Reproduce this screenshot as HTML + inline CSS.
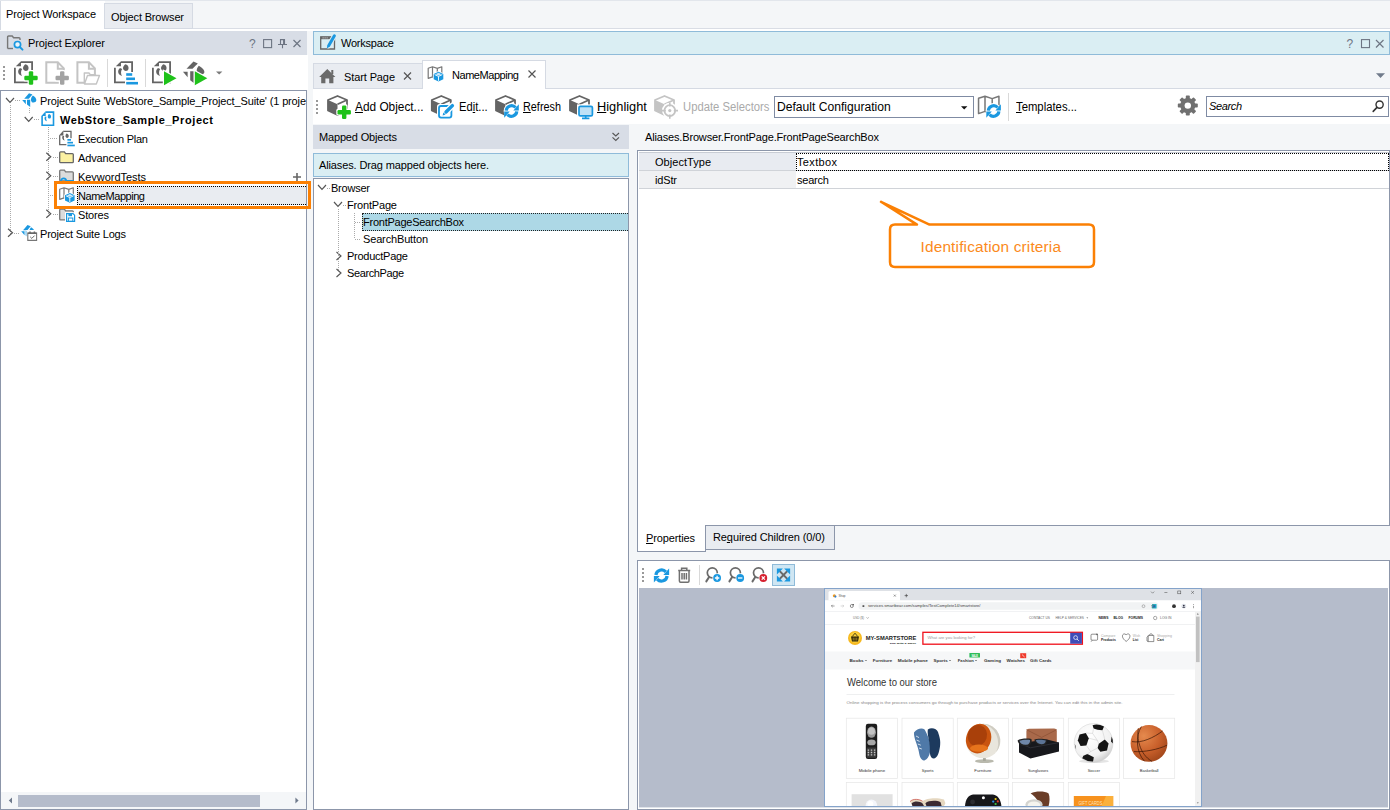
<!DOCTYPE html>
<html><head><meta charset="utf-8"><title>NameMapping</title><style>
html,body{margin:0;padding:0;}
body{width:1390px;height:810px;position:relative;overflow:hidden;background:#f4f6f8;font-family:"Liberation Sans", sans-serif;font-size:11px;}
body>div,body>span,body>svg{position:absolute;}
.t{white-space:nowrap;display:block;}
u{text-decoration:underline;text-underline-offset:1px;}
</style></head><body>
<div style="left:0px;top:0px;width:1390px;height:1px;background:#e2e6ec;"></div>
<div style="left:0px;top:28px;width:1390px;height:1px;background:#d9dde5;"></div>
<div style="left:0px;top:29px;width:1390px;height:2px;background:#fff;"></div>
<div style="left:0px;top:0px;width:105px;height:30px;background:#fff;"></div>
<div style="left:0px;top:0px;width:1px;height:30px;background:#d5dae3;"></div>
<div style="left:0px;top:0px;width:105px;height:1px;background:#e2e6ec;"></div>
<div style="left:104px;top:3px;width:89px;height:26px;background:#e9ecf1;box-shadow:inset 0 0 0 1px #d5dae3;"></div>
<span id="t0" class="t" style="left:6px;top:6.19px;font-size:11px;color:#000;line-height:16px;letter-spacing:-0.132px;">Project Workspace</span>
<span id="t1" class="t" style="left:111px;top:9.19px;font-size:11px;color:#000;line-height:16px;letter-spacing:-0.169px;">Object Browser</span>
<div style="left:0px;top:31px;width:307px;height:24px;background:#d8dde6;"></div>
<span id="t2" class="t" style="left:28px;top:35.19px;font-size:11px;color:#000;line-height:16px;letter-spacing:-0.084px;">Project Explorer</span>
<svg style="left:5px;top:33px;" width="22" height="20" viewBox="0 0 22 20"><path d="M2.6 15.5 V4 Q2.6 3 3.6 3 H7.2 L8.6 4.8 H14 Q15 4.8 15 5.8 V7" fill="none" stroke="#777" stroke-width="1.4"/>
<path d="M2.6 15.5 H8" stroke="#777" stroke-width="1.4"/>
<circle cx="12.5" cy="11.6" r="3.1" fill="#eaf4fb" stroke="#1a98e0" stroke-width="1.7"/><path d="M14.8 14 L17.5 16.6" stroke="#1a98e0" stroke-width="2" stroke-linecap="round"/></svg>
<svg style="left:245px;top:35px;" width="62" height="16" viewBox="0 0 62 16"><text x="4" y="13.2" font-size="12" fill="#6d7583" font-family="Liberation Sans, sans-serif">?</text>
<rect x="18.6" y="4.6" width="8" height="8" fill="none" stroke="#6d7583" stroke-width="1.1"/>
<path d="M33 9.5 H42 M35.5 9.5 V4.6 H39.5 V9.5 M38.6 4.6 V9.5 M37.5 9.5 V13.3" fill="none" stroke="#6d7583" stroke-width="1.1"/>
<path d="M48.5 5 L55.5 12 M55.5 5 L48.5 12" stroke="#6d7583" stroke-width="1.2"/></svg>
<div style="left:0px;top:55px;width:308px;height:35px;background:#fff;"></div>
<svg style="left:0px;top:55px;" width="308" height="35" viewBox="0 55 308 35"><rect x="3" y="66" width="2" height="2" fill="#999"/><rect x="3" y="70" width="2" height="2" fill="#999"/><rect x="3" y="74" width="2" height="2" fill="#999"/><rect x="3" y="78" width="2" height="2" fill="#999"/><g transform="translate(14 61.3)"><path d="M7 0.9 H18.1 V21.1 H0.9 V6.4" fill="none" stroke="#646464" stroke-width="1.8"/><path d="M1.8 5 L7 0 V5 Z" fill="#646464"/><path d="M6 6.8 C3.2 9 3.4 13.4 8 14.6 C6.6 12.6 6.8 9.6 8.2 7.8 Z" fill="#646464"/><path d="M11.6 3 C14.6 4 15.4 7.2 13.6 9.2 C11.6 10.4 9 9.2 9 6.8 C9.2 4.8 10.4 3.6 11.6 3 Z" fill="#646464"/></g><rect x="23.1" y="74.6" width="15.8" height="6.800000000000001" rx="1.6" fill="#fff"/><rect x="27.6" y="70.1" width="6.800000000000001" height="15.8" rx="1.6" fill="#fff"/><rect x="24.3" y="75.8" width="13.4" height="4.4" rx="1.2" fill="#1fc21a"/><rect x="28.8" y="71.3" width="4.4" height="13.4" rx="1.2" fill="#1fc21a"/><g transform="translate(45.3 61.3)"><path d="M1 1 H12.5 L18.5 7 V21.5 H1 Z" fill="none" stroke="#c4c4c4" stroke-width="2"/><path d="M12.5 1 V7.5 H18.5" fill="none" stroke="#c4c4c4" stroke-width="2"/></g><rect x="54.3" y="74.6" width="15.8" height="6.800000000000001" rx="1.6" fill="#fff"/><rect x="58.8" y="70.1" width="6.800000000000001" height="15.8" rx="1.6" fill="#fff"/><rect x="55.5" y="75.8" width="13.4" height="4.4" rx="1.2" fill="#a3a3a3"/><rect x="60.0" y="71.3" width="4.4" height="13.4" rx="1.2" fill="#a3a3a3"/><g transform="translate(76.4 61.3)"><path d="M1 1 H12.5 L18.5 7 V21.5 H1 Z" fill="none" stroke="#c4c4c4" stroke-width="2"/><path d="M12.5 1 V7.5 H18.5" fill="none" stroke="#c4c4c4" stroke-width="2"/></g><path d="M84.5 84 L87.5 75.5 H99.5 L96.3 84 Z M84.3 84 V73 H89 L90.3 74.6 H95.5 V75.5" fill="#fff" stroke="#c4c4c4" stroke-width="1.4" stroke-linejoin="round"/><rect x="107" y="59" width="1" height="28" fill="#d9d9d9"/><g transform="translate(114 61.3)"><path d="M7 0.9 H18.1 V21.1 H0.9 V6.4" fill="none" stroke="#646464" stroke-width="1.8"/><path d="M1.8 5 L7 0 V5 Z" fill="#646464"/><path d="M6 6.8 C3.2 9 3.4 13.4 8 14.6 C6.6 12.6 6.8 9.6 8.2 7.8 Z" fill="#646464"/><path d="M11.6 3 C14.6 4 15.4 7.2 13.6 9.2 C11.6 10.4 9 9.2 9 6.8 C9.2 4.8 10.4 3.6 11.6 3 Z" fill="#646464"/></g><rect x="125" y="72" width="14" height="14" fill="#fff"/><rect x="126.2" y="73.2" width="6" height="2.6" fill="#1a98e0"/><rect x="126.2" y="77.5" width="8.8" height="2.6" fill="#1a98e0"/><rect x="126.2" y="81.9" width="11.8" height="2.6" fill="#1a98e0"/><rect x="145" y="59" width="1" height="28" fill="#d9d9d9"/><g transform="translate(152 61.3)"><path d="M7 0.9 H18.1 V21.1 H0.9 V6.4" fill="none" stroke="#646464" stroke-width="1.8"/><path d="M1.8 5 L7 0 V5 Z" fill="#646464"/><path d="M6 6.8 C3.2 9 3.4 13.4 8 14.6 C6.6 12.6 6.8 9.6 8.2 7.8 Z" fill="#646464"/><path d="M11.6 3 C14.6 4 15.4 7.2 13.6 9.2 C11.6 10.4 9 9.2 9 6.8 C9.2 4.8 10.4 3.6 11.6 3 Z" fill="#646464"/></g><path d="M162.8 69.2 L179.0 78.2 L162.8 87.2 Z" fill="#fff"/><path d="M164 71.2 L176.5 78.2 L164 85.2 Z" fill="#1fc21a"/><g transform="translate(183 61.2)"><path d="M3.5 7.5 L10.5 0.3 L14.8 2.2 L9.5 7.5 Z" fill="#646464"/><path d="M0 10.5 H4.6 V16 Z" fill="#646464"/><path d="M7.2 10 H10.8 V21.8 L7.2 19 Z" fill="#646464"/><path d="M15.8 4.6 C19 6.5 21.8 9 21.3 11.2 C20.5 13.6 17.5 13.8 15.2 13 C13.2 11.5 13 7.5 15.8 4.6 Z" fill="#646464"/></g><path d="M193.60000000000002 69.2 L209.8 78.2 L193.60000000000002 87.2 Z" fill="#fff"/><path d="M194.8 71.2 L207.3 78.2 L194.8 85.2 Z" fill="#1fc21a"/><path d="M216 71.5 H222.4 L219.2 74.6 Z" fill="#7a7a7a"/></svg>
<div style="left:0px;top:90px;width:307px;height:720px;background:#fff;box-shadow:inset 0 0 0 1px #8c96aa;"></div>
<div style="left:10px;top:105px;width:1px;height:129px;background-image:linear-gradient(#aaa 50%,transparent 50%);background-size:1px 2px;"></div>
<div style="left:29px;top:108px;width:1px;height:6px;background-image:linear-gradient(#aaa 50%,transparent 50%);background-size:1px 2px;"></div>
<div style="left:48px;top:127px;width:1px;height:88px;background-image:linear-gradient(#aaa 50%,transparent 50%);background-size:1px 2px;"></div>
<div style="left:15px;top:100px;width:6px;height:1px;background-image:linear-gradient(90deg,#aaa 50%,transparent 50%);background-size:2px 1px;"></div>
<div style="left:34px;top:119px;width:6px;height:1px;background-image:linear-gradient(90deg,#aaa 50%,transparent 50%);background-size:2px 1px;"></div>
<div style="left:50px;top:138px;width:8px;height:1px;background-image:linear-gradient(90deg,#aaa 50%,transparent 50%);background-size:2px 1px;"></div>
<div style="left:53px;top:157px;width:5px;height:1px;background-image:linear-gradient(90deg,#aaa 50%,transparent 50%);background-size:2px 1px;"></div>
<div style="left:53px;top:176px;width:5px;height:1px;background-image:linear-gradient(90deg,#aaa 50%,transparent 50%);background-size:2px 1px;"></div>
<div style="left:50px;top:195px;width:8px;height:1px;background-image:linear-gradient(90deg,#aaa 50%,transparent 50%);background-size:2px 1px;"></div>
<div style="left:53px;top:214px;width:5px;height:1px;background-image:linear-gradient(90deg,#aaa 50%,transparent 50%);background-size:2px 1px;"></div>
<div style="left:14px;top:233px;width:6px;height:1px;background-image:linear-gradient(90deg,#aaa 50%,transparent 50%);background-size:2px 1px;"></div>
<svg style="left:0px;top:90px;" width="307" height="160" viewBox="0 90 307 160"><path d="M6 98 L10 102.5 L14 98" fill="none" stroke="#555" stroke-width="1.15"/><path d="M24.7 117 L28.7 121.5 L32.7 117" fill="none" stroke="#555" stroke-width="1.15"/><path d="M46.3 152.8 L50.8 156.8 L46.3 160.8" fill="none" stroke="#555" stroke-width="1.15"/><path d="M46.3 171.8 L50.8 175.8 L46.3 179.8" fill="none" stroke="#555" stroke-width="1.15"/><path d="M46.3 209.8 L50.8 213.8 L46.3 217.8" fill="none" stroke="#555" stroke-width="1.15"/><path d="M8 228.8 L12.5 232.8 L8 236.8" fill="none" stroke="#555" stroke-width="1.15"/><g transform="translate(22.2 93)"><path d="M2 5.8 L6.8 0.2 L10.2 1.6 L6.6 5.8 Z" fill="#1a98e0"/><path d="M0 6.9 H3.6 V11.2 Z" fill="#1a98e0"/><path d="M4.8 6.8 H8 V14 L4.8 11.4 Z" fill="#1a98e0"/><path d="M10.6 2.6 C12.8 3.8 14.4 5.8 14.1 7.6 C13.5 9.6 11.4 9.8 9.7 9.2 C8.2 8 8.4 4.8 10.6 2.6 Z" fill="#1a98e0"/></g><g transform="translate(41.3 111.3)"><path d="M4.3 0.8 H12.2 V14 H0.8 V4.6" fill="#fff" stroke="#1a98e0" stroke-width="1.6"/><path d="M0 4.8 L4.4 0 V4.8 Z" fill="#1a98e0"/><path d="M3.6 5.2 C2.6 7.5 3.4 9.6 5.8 10 C4.8 8.6 4.6 7 5.2 5.4 Z" fill="#1a98e0"/><path d="M7.8 2.8 C9.8 3.4 10.4 5.4 9.2 7 C7.8 7.8 6.3 6.8 6.5 5.1 C6.6 3.8 7.1 3.1 7.8 2.8 Z" fill="#1a98e0"/></g><g transform="translate(59 130.6)"><path d="M4.3 0.7 H12 V14 H0.7 V4.6" fill="#fff" stroke="#666" stroke-width="1.3"/><path d="M0 4.8 L4.4 0 V4.8 Z" fill="#666"/><path d="M3.6 5.2 C2.6 7.5 3.4 9.6 5.8 10 C4.8 8.6 4.6 7 5.2 5.4 Z" fill="#666"/><path d="M7.8 2.8 C9.8 3.4 10.4 5.4 9.2 7 C7.8 7.8 6.3 6.8 6.5 5.1 C6.6 3.8 7.1 3.1 7.8 2.8 Z" fill="#666"/><rect x="7.4" y="7.6" width="8.4" height="8" fill="#fff"/><rect x="8.4" y="8.4" width="3.6" height="1.7" fill="#1a98e0"/><rect x="8.4" y="11.2" width="5.6" height="1.7" fill="#1a98e0"/><rect x="8.4" y="14" width="7.4" height="1.7" fill="#1a98e0"/></g><g transform="translate(59 151.2)"><path d="M0.7 1.6 Q0.7 0.7 1.6 0.7 H5.4 L6.6 2.4 H13.4 Q14.3 2.4 14.3 3.3 V10.6 Q14.3 11.5 13.4 11.5 H1.6 Q0.7 11.5 0.7 10.6 Z" fill="#fbf1a2" stroke="#666" stroke-width="1.3"/></g><g transform="translate(59 169.4)"><path d="M0.7 1.6 Q0.7 0.7 1.6 0.7 H5.4 L6.6 2.4 H13.4 Q14.3 2.4 14.3 3.3 V10.6 Q14.3 11.5 13.4 11.5 H1.6 Q0.7 11.5 0.7 10.6 Z" fill="#dcdcdc" stroke="#777" stroke-width="1.3"/></g><path d="M61 181 a2.6 2.6 0 1 1 5.2 0 H74" fill="none" stroke="#1a98e0" stroke-width="1.8"/><g transform="translate(59 208.4)"><path d="M0.7 1.6 Q0.7 0.7 1.6 0.7 H5.4 L6.6 2.4 H13.4 Q14.3 2.4 14.3 3.3 V10.6 Q14.3 11.5 13.4 11.5 H1.6 Q0.7 11.5 0.7 10.6 Z" fill="#dcdcdc" stroke="#777" stroke-width="1.3"/></g><rect x="65" y="212.2" width="11" height="10.6" fill="#fff"/><path d="M66.6 213.6 H73 L74.6 215.2 V221.4 H66.6 Z" fill="#fff" stroke="#1a98e0" stroke-width="1.2"/><rect x="68.4" y="213.6" width="3.6" height="2.6" fill="#1a98e0"/><rect x="68.4" y="218" width="4.4" height="3.4" fill="none" stroke="#1a98e0" stroke-width="1"/><g transform="translate(21.2 224.8) scale(0.93)"><path d="M2 5.8 L6.8 0.2 L10.2 1.6 L6.6 5.8 Z" fill="#1a98e0"/><path d="M0 6.9 H3.6 V11.2 Z" fill="#1a98e0"/><path d="M4.8 6.8 H8 V14 L4.8 11.4 Z" fill="#1a98e0"/><path d="M10.6 2.6 C12.8 3.8 14.4 5.8 14.1 7.6 C13.5 9.6 11.4 9.8 9.7 9.2 C8.2 8 8.4 4.8 10.6 2.6 Z" fill="#1a98e0"/></g><rect x="26.4" y="230" width="11.6" height="11.6" fill="#fff"/><path d="M27.8 233 H36.6 V240.4 H27.8 Z" fill="#fff" stroke="#777" stroke-width="1.1"/><path d="M27.8 233.2 H36.6 M30 231.4 V233 M34.4 231.4 V233" stroke="#666" stroke-width="1.5"/><path d="M30.2 236.8 L31.8 238.4 L34.6 235.6" fill="none" stroke="#666" stroke-width="1"/><path d="M293 177 H301 M297 173 V181" stroke="#666" stroke-width="1.6"/></svg>
<span id="t3" class="t" style="left:40px;top:93.19px;font-size:11px;color:#000;line-height:16px;letter-spacing:-0.144px;">Project Suite 'WebStore_Sample_Project_Suite' (1 proje</span>
<span id="t4" class="t" style="left:60px;top:112.19px;font-size:11px;color:#000;line-height:16px;font-weight:700;letter-spacing:0.600px;">WebStore_Sample_Project</span>
<span id="t5" class="t" style="left:78px;top:131.19px;font-size:11px;color:#000;line-height:16px;letter-spacing:-0.261px;">Execution Plan</span>
<span id="t6" class="t" style="left:78px;top:150.19px;font-size:11px;color:#000;line-height:16px;letter-spacing:-0.134px;">Advanced</span>
<span id="t7" class="t" style="left:78px;top:169.19px;font-size:11px;color:#000;line-height:16px;letter-spacing:-0.044px;">KeywordTests</span>
<div style="left:77px;top:186px;width:229px;height:19px;background:#e9ecf1;box-sizing:border-box;border:1px dotted #000;border-right:none"></div>
<div style="left:54px;top:181px;width:251px;height:22px;border:3px solid #fb8004;box-sizing:content-box;"></div>
<svg style="left:57px;top:185px;" width="22" height="20" viewBox="57 185 22 20"><g transform="translate(59 187)"><path d="M0.7 2.2 L5 0.8 L9.8 2.4 L14.3 0.8 V11 L9.8 12.5 L5 10.9 L0.7 12.4 Z M5 0.8 V10.9 M9.8 2.4 V12.5" fill="#fff" stroke="#777" stroke-width="1.2" stroke-linejoin="round"/></g><g transform="translate(64.8 192.8)"><path d="M5 -0.6 L10.6 2 V8 L5 10.8 L-0.6 8 V2 Z" fill="#fff"/><path d="M5 0.2 L9.8 2.4 V7.6 L5 10 L0.2 7.6 V2.4 Z" fill="#1a98e0"/><path d="M1.2 3 L5 4.8 L8.8 3 M5 4.8 V9.2" fill="none" stroke="#fff" stroke-width="0.9"/><path d="M5 1.2 L8 2.6 L5 4 L2 2.6 Z" fill="#cfe9f9"/></g></svg>
<span id="t8" class="t" style="left:78px;top:188.19px;font-size:11px;color:#000;line-height:16px;letter-spacing:-0.455px;">NameMapping</span>
<span id="t9" class="t" style="left:78px;top:207.19px;font-size:11px;color:#000;line-height:16px;letter-spacing:-0.159px;">Stores</span>
<span id="t10" class="t" style="left:40px;top:226.19px;font-size:11px;color:#000;line-height:16px;letter-spacing:-0.193px;">Project Suite Logs</span>
<div style="left:1px;top:792px;width:305px;height:17px;background:#f4f6f8;"></div>
<div style="left:18px;top:795px;width:242px;height:12px;background:#b5bccb;"></div>
<svg style="left:1px;top:792px;" width="305" height="17" viewBox="0 0 305 17"><path d="M11 5.6 V11.6 L7.8 8.6 Z M294.4 5.6 V11.6 L297.6 8.6 Z" fill="#6f7a8c"/></svg>
<div style="left:313px;top:31px;width:1077px;height:24px;background:#daeef3;box-shadow:inset 0 0 0 1px #8fbbd9;"></div>
<span id="t11" class="t" style="left:341px;top:35.19px;font-size:11px;color:#000;line-height:16px;letter-spacing:-0.229px;">Workspace</span>
<svg style="left:318px;top:33px;" width="20" height="18" viewBox="0 0 20 18"><path d="M2.7 4 H16.5 V16 H2.7 Z" fill="#daeef3" stroke="#666" stroke-width="1.3"/><rect x="2.7" y="3.6" width="13.8" height="2.6" fill="#666"/><rect x="4.6" y="4.4" width="1" height="1" fill="#ddd"/><rect x="6.6" y="4.4" width="1" height="1" fill="#ddd"/><rect x="8.6" y="4.4" width="1" height="1" fill="#ddd"/><path d="M10.4 13 L16.6 2.4" stroke="#daeef3" stroke-width="5" stroke-linecap="round"/><path d="M10.8 12.4 L16.4 2.8" stroke="#1a98e0" stroke-width="3" stroke-linecap="round"/><path d="M8.8 15.4 L9.4 12.2 L11.8 13.6 Z" fill="#1a98e0"/></svg>
<svg style="left:1340px;top:35px;" width="50" height="16" viewBox="0 0 50 16"><text x="6.5" y="13.2" font-size="12" fill="#6d7583" font-family="Liberation Sans, sans-serif">?</text>
<rect x="21.5" y="4.6" width="8" height="8" fill="none" stroke="#6d7583" stroke-width="1.1"/>
<path d="M36 5 L43.5 12.5 M43.5 5 L36 12.5" stroke="#6d7583" stroke-width="1.2"/></svg>
<div style="left:313px;top:88px;width:1077px;height:1px;background:#d5dae3;"></div>
<div style="left:313px;top:63px;width:110px;height:26px;background:#e9ecf1;box-shadow:inset 0 0 0 1px #d5dae3;"></div>
<div style="left:422px;top:60px;width:124px;height:29px;background:#fff;box-shadow:inset 0 0 0 1px #d5dae3;"></div>
<div style="left:423px;top:88px;width:122px;height:2px;background:#fff;"></div>
<span id="t12" class="t" style="left:344px;top:69.19px;font-size:11px;color:#000;line-height:16px;letter-spacing:-0.109px;">Start Page</span>
<span id="t13" class="t" style="left:452px;top:67.19px;font-size:11px;color:#000;line-height:16px;letter-spacing:-0.455px;">NameMapping</span>
<svg style="left:313px;top:60px;" width="1077" height="29" viewBox="313 60 1077 29"><path d="M319.2 77 L327.3 69 L335.4 77 H333.4 V83.2 H329.2 V78.6 H325.4 V83.2 H321.2 V77 Z" fill="#6a6a6a"/><rect x="331.3" y="70" width="2" height="4" fill="#6a6a6a"/><path d="M404 72.5 L411 79.5 M411 72.5 L404 79.5 M528.5 70.5 L535.5 77.5 M535.5 70.5 L528.5 77.5" stroke="#555" stroke-width="1.2"/><g transform="translate(427.5 66)"><path d="M0.7 2.2 L5 0.8 L9.8 2.4 L14.3 0.8 V11 L9.8 12.5 L5 10.9 L0.7 12.4 Z M5 0.8 V10.9 M9.8 2.4 V12.5" fill="#fff" stroke="#777" stroke-width="1.2" stroke-linejoin="round"/></g><g transform="translate(433.5 71.6)"><path d="M5 -0.6 L10.6 2 V8 L5 10.8 L-0.6 8 V2 Z" fill="#fff"/><path d="M5 0.2 L9.8 2.4 V7.6 L5 10 L0.2 7.6 V2.4 Z" fill="#1a98e0"/><path d="M1.2 3 L5 4.8 L8.8 3 M5 4.8 V9.2" fill="none" stroke="#fff" stroke-width="0.9"/><path d="M5 1.2 L8 2.6 L5 4 L2 2.6 Z" fill="#cfe9f9"/></g><path d="M1376 73.2 H1385 L1380.5 78 Z" fill="#717b8b"/></svg>
<div style="left:313px;top:89px;width:1077px;height:35px;background:#fff;"></div>
<svg style="left:313px;top:89px;" width="1077" height="35" viewBox="313 89 1077 35"><rect x="316" y="100" width="2" height="2" fill="#999"/><rect x="316" y="104" width="2" height="2" fill="#999"/><rect x="316" y="108" width="2" height="2" fill="#999"/><rect x="316" y="112" width="2" height="2" fill="#999"/><g transform="translate(327 95)"><path d="M10.5 1 L20 5 V15.5 L10.5 20 L1 15.5 V5 Z" fill="#fff" stroke="#646464" stroke-width="1.8" stroke-linejoin="round"/><path d="M1 5 L10.5 9.3 V20 L1 15.5 Z" fill="#646464"/><path d="M10.5 9.3 L20 5" stroke="#646464" stroke-width="1.8" fill="none"/></g><rect x="336.3" y="108.8" width="15.8" height="6.800000000000001" rx="1.6" fill="#fff"/><rect x="340.8" y="104.3" width="6.800000000000001" height="15.8" rx="1.6" fill="#fff"/><rect x="337.5" y="110.0" width="13.4" height="4.4" rx="1.2" fill="#1fc21a"/><rect x="342.0" y="105.5" width="4.4" height="13.4" rx="1.2" fill="#1fc21a"/><g transform="translate(430.8 95)"><path d="M10.5 1 L20 5 V15.5 L10.5 20 L1 15.5 V5 Z" fill="#fff" stroke="#646464" stroke-width="1.8" stroke-linejoin="round"/><path d="M1 5 L10.5 9.3 V20 L1 15.5 Z" fill="#646464"/><path d="M10.5 9.3 L20 5" stroke="#646464" stroke-width="1.8" fill="none"/></g><rect x="437" y="104" width="16" height="15.4" rx="2.5" fill="#fff"/><rect x="439" y="106" width="12.4" height="11.6" rx="2" fill="#fff" stroke="#1a98e0" stroke-width="1.8"/><path d="M445.6 112.4 L452.6 105.4" stroke="#fff" stroke-width="6" stroke-linecap="round"/><path d="M446 112 L452.4 105.6" stroke="#1a98e0" stroke-width="3.4" stroke-linecap="round"/><path d="M442.6 115.4 L443.4 112.4 L445.6 114.6 Z" fill="#1a98e0"/><g transform="translate(495 95)"><path d="M10.5 1 L20 5 V15.5 L10.5 20 L1 15.5 V5 Z" fill="#fff" stroke="#646464" stroke-width="1.8" stroke-linejoin="round"/><path d="M1 5 L10.5 9.3 V20 L1 15.5 Z" fill="#646464"/><path d="M10.5 9.3 L20 5" stroke="#646464" stroke-width="1.8" fill="none"/></g><circle cx="511.5" cy="111" r="7.9" fill="#fff"/><path d="M506.22 110.54 A5.3 5.3 0 0 1 515.56 107.59 M516.78 111.46 A5.3 5.3 0 0 1 507.44 114.41" fill="none" stroke="#1a98e0" stroke-width="3.2"/><path d="M518.80 104.20 V110.60 H513.30 Z" fill="#1a98e0"/><path d="M504.20 117.80 V111.40 H509.70 Z" fill="#1a98e0"/><g transform="translate(569 95)"><path d="M10.5 1 L20 5 V15.5 L10.5 20 L1 15.5 V5 Z" fill="#fff" stroke="#646464" stroke-width="1.8" stroke-linejoin="round"/><path d="M1 5 L10.5 9.3 V20 L1 15.5 Z" fill="#646464"/><path d="M10.5 9.3 L20 5" stroke="#646464" stroke-width="1.8" fill="none"/></g><rect x="577" y="104.4" width="17.4" height="15.6" fill="#fff"/><rect x="579" y="106.4" width="13.4" height="9.4" rx="1.4" fill="#bfe1f6" stroke="#1a98e0" stroke-width="1.7"/><path d="M585.7 116 V118 M582 118.4 H589.4" stroke="#1a98e0" stroke-width="1.7"/><g transform="translate(654 95)"><path d="M10.5 1 L20 5 V15.5 L10.5 20 L1 15.5 V5 Z" fill="#fff" stroke="#c4c4c4" stroke-width="1.8" stroke-linejoin="round"/><path d="M1 5 L10.5 9.3 V20 L1 15.5 Z" fill="#c4c4c4"/><path d="M10.5 9.3 L20 5" stroke="#c4c4c4" stroke-width="1.8" fill="none"/></g><circle cx="669.8" cy="110.6" r="7.8" fill="#fff"/><circle cx="669.8" cy="110.6" r="5.4" fill="#fff" stroke="#c4c4c4" stroke-width="1.8"/><path d="M669.8 102.4 V106.6 M669.8 114.6 V118.8 M661.6 110.6 H665.8 M673.8 110.6 H678" stroke="#c4c4c4" stroke-width="1.6"/><circle cx="669.8" cy="110.6" r="1.6" fill="#c4c4c4"/><g transform="translate(977.5 95) scale(1.5)"><path d="M0.7 2.2 L5 0.8 L9.8 2.4 L14.3 0.8 V11 L9.8 12.5 L5 10.9 L0.7 12.4 Z M5 0.8 V10.9 M9.8 2.4 V12.5" fill="#fff" stroke="#777" stroke-width="1.0" stroke-linejoin="round"/></g><circle cx="993.6" cy="111" r="7.9" fill="#fff"/><path d="M988.32 110.54 A5.3 5.3 0 0 1 997.66 107.59 M998.88 111.46 A5.3 5.3 0 0 1 989.54 114.41" fill="none" stroke="#1a98e0" stroke-width="3.2"/><path d="M1000.90 104.20 V110.60 H995.40 Z" fill="#1a98e0"/><path d="M986.30 117.80 V111.40 H991.80 Z" fill="#1a98e0"/><rect x="1008" y="93" width="1" height="28" fill="#d9d9d9"/><g transform="translate(1187.8 105.6)"><rect x="-2" y="-10" width="4" height="5" rx="0.8" fill="#707070" transform="rotate(0)"/><rect x="-2" y="-10" width="4" height="5" rx="0.8" fill="#707070" transform="rotate(45)"/><rect x="-2" y="-10" width="4" height="5" rx="0.8" fill="#707070" transform="rotate(90)"/><rect x="-2" y="-10" width="4" height="5" rx="0.8" fill="#707070" transform="rotate(135)"/><rect x="-2" y="-10" width="4" height="5" rx="0.8" fill="#707070" transform="rotate(180)"/><rect x="-2" y="-10" width="4" height="5" rx="0.8" fill="#707070" transform="rotate(225)"/><rect x="-2" y="-10" width="4" height="5" rx="0.8" fill="#707070" transform="rotate(270)"/><rect x="-2" y="-10" width="4" height="5" rx="0.8" fill="#707070" transform="rotate(315)"/><circle r="7.6" fill="#707070"/><circle r="3.2" fill="#fff"/></g></svg>
<span id="t14" class="t" style="left:354.5px;top:99.34px;font-size:12px;color:#000;line-height:16px;transform-origin:0 0;transform:scaleX(0.9872);"><u>A</u>dd Object...</span>
<span id="t15" class="t" style="left:458.7px;top:99.34px;font-size:12px;color:#000;line-height:16px;transform-origin:0 0;transform:scaleX(0.9315);">Ed<u>i</u>t...</span>
<span id="t16" class="t" style="left:523px;top:99.34px;font-size:12px;color:#000;line-height:16px;transform-origin:0 0;transform:scaleX(0.9041);"><u>R</u>efresh</span>
<span id="t17" class="t" style="left:596.6px;top:99.34px;font-size:12px;color:#000;line-height:16px;transform-origin:0 0;transform:scaleX(1.0685);"><u>H</u>ighlight</span>
<span id="t18" class="t" style="left:682.5px;top:99.34px;font-size:12px;color:#aaa;line-height:16px;transform-origin:0 0;transform:scaleX(0.9396);">Update Selectors</span>
<div style="left:774px;top:96px;width:200px;height:22px;background:#fff;box-shadow:inset 0 0 0 1px #7f8ba3;"></div>
<span id="t19" class="t" style="left:777.3px;top:99.34px;font-size:12px;color:#000;line-height:16px;transform-origin:0 0;transform:scaleX(1.0086);">Default Configuration</span>
<svg style="left:958px;top:103px;" width="12" height="10" viewBox="0 0 12 10"><path d="M3 3.3 H9.4 L6.2 6.5 Z" fill="#111"/></svg>
<span id="t20" class="t" style="left:1016px;top:99.34px;font-size:12px;color:#000;line-height:16px;transform-origin:0 0;transform:scaleX(0.9428);"><u>T</u>emplates...</span>
<div style="left:1206px;top:96px;width:183px;height:21px;background:#fff;box-shadow:inset 0 0 0 1px #7f8ba3;"></div>
<span id="t21" class="t" style="left:1209px;top:98.19px;font-size:11px;color:#000;line-height:16px;font-style:italic;letter-spacing:-0.372px;">Search</span>
<svg style="left:1370px;top:98px;" width="18" height="16" viewBox="0 0 18 16"><circle cx="9.6" cy="6.6" r="3.6" fill="none" stroke="#333" stroke-width="1.4"/><path d="M7 9.4 L3.2 13.4" stroke="#333" stroke-width="1.6" stroke-linecap="round"/></svg>
<div style="left:313px;top:125px;width:316px;height:24px;background:#d8dde6;"></div>
<span id="t22" class="t" style="left:319px;top:129.19px;font-size:11px;color:#000;line-height:16px;letter-spacing:-0.162px;">Mapped Objects</span>
<svg style="left:608.8px;top:130px;" width="14" height="14" viewBox="0 0 14 14"><path d="M3.5 3 L6.8 6 L10 3 M3.5 7.4 L6.8 10.4 L10 7.4" fill="none" stroke="#555" stroke-width="1.1"/></svg>
<div style="left:313px;top:153px;width:316px;height:24px;background:#daeef3;box-shadow:inset 0 0 0 1px #8fbbd9;"></div>
<span id="t23" class="t" style="left:319px;top:157.19px;font-size:11px;color:#000;line-height:16px;letter-spacing:-0.129px;">Aliases. Drag mapped objects here.</span>
<div style="left:313px;top:178px;width:316px;height:632px;background:#fff;box-shadow:inset 0 0 0 1px #8c96aa;"></div>
<div style="left:362px;top:213px;width:266px;height:18px;background:#add8e6;box-sizing:border-box;border:1px dotted #222;border-right:none;"></div>
<span id="t24" class="t" style="left:331px;top:180.19px;font-size:11px;color:#000;line-height:16px;letter-spacing:-0.224px;">Browser</span>
<span id="t25" class="t" style="left:347px;top:197.19px;font-size:11px;color:#000;line-height:16px;letter-spacing:-0.172px;">FrontPage</span>
<span id="t26" class="t" style="left:363px;top:214.19px;font-size:11px;color:#000;line-height:16px;letter-spacing:-0.245px;">FrontPageSearchBox</span>
<span id="t27" class="t" style="left:363px;top:231.19px;font-size:11px;color:#000;line-height:16px;letter-spacing:-0.151px;">SearchButton</span>
<span id="t28" class="t" style="left:347px;top:248.19px;font-size:11px;color:#000;line-height:16px;letter-spacing:-0.261px;">ProductPage</span>
<span id="t29" class="t" style="left:347px;top:265.19px;font-size:11px;color:#000;line-height:16px;letter-spacing:-0.394px;">SearchPage</span>
<svg style="left:313px;top:178px;" width="60" height="110" viewBox="313 178 60 110"><path d="M318 185 L322 189.5 L326 185" fill="none" stroke="#555" stroke-width="1.15"/><path d="M334 202 L338 206.5 L342 202" fill="none" stroke="#555" stroke-width="1.15"/><path d="M336.5 252 L341.0 256 L336.5 260" fill="none" stroke="#555" stroke-width="1.15"/><path d="M336.5 269 L341.0 273 L336.5 277" fill="none" stroke="#555" stroke-width="1.15"/></svg>
<div style="left:338px;top:209px;width:1px;height:62px;background-image:linear-gradient(#aaa 50%,transparent 50%);background-size:1px 2px;"></div>
<div style="left:354px;top:213px;width:1px;height:26px;background-image:linear-gradient(#aaa 50%,transparent 50%);background-size:1px 2px;"></div>
<div style="left:355px;top:222px;width:6px;height:1px;background-image:linear-gradient(90deg,#aaa 50%,transparent 50%);background-size:2px 1px;"></div>
<div style="left:355px;top:239px;width:6px;height:1px;background-image:linear-gradient(90deg,#aaa 50%,transparent 50%);background-size:2px 1px;"></div>
<div style="left:327px;top:188px;width:3px;height:1px;background-image:linear-gradient(90deg,#aaa 50%,transparent 50%);background-size:2px 1px;"></div>
<div style="left:343px;top:205px;width:3px;height:1px;background-image:linear-gradient(90deg,#aaa 50%,transparent 50%);background-size:2px 1px;"></div>
<span id="t30" class="t" style="left:645px;top:129.19px;font-size:11px;color:#000;line-height:16px;letter-spacing:-0.161px;">Aliases.Browser.FrontPage.FrontPageSearchBox</span>
<div style="left:637px;top:150px;width:753px;height:376px;background:#fff;box-shadow:inset 0 0 0 1px #8c96aa;"></div>
<div style="left:639px;top:153px;width:157px;height:17px;background:#e8ebf1;"></div>
<div style="left:639px;top:171px;width:157px;height:17px;background:#f0f1f3;"></div>
<div style="left:639px;top:152px;width:750px;height:1px;background:#c8ccd4;"></div>
<div style="left:639px;top:170px;width:750px;height:1px;background:#d0d3d8;"></div>
<div style="left:639px;top:188px;width:750px;height:1px;background:#d0d3d8;"></div>
<div style="left:796px;top:153px;width:593px;height:18px;box-sizing:border-box;border:1px dotted #000;"></div>
<span id="t31" class="t" style="left:655px;top:154.19px;font-size:11px;color:#000;line-height:16px;letter-spacing:0.040px;">ObjectType</span>
<span id="t32" class="t" style="left:797px;top:154.19px;font-size:11px;color:#000;line-height:16px;letter-spacing:0.346px;">Textbox</span>
<span id="t33" class="t" style="left:655px;top:172.19px;font-size:11px;color:#000;line-height:16px;letter-spacing:-0.156px;">idStr</span>
<span id="t34" class="t" style="left:797px;top:172.19px;font-size:11px;color:#000;line-height:16px;letter-spacing:-0.206px;">search</span>
<svg style="left:870px;top:195px" width="240" height="85" viewBox="870 195 240 85">
<path d="M881 201.8 L929.5 224.6 L1089 224.6 Q1094 224.6 1094 229.6 L1094 262 Q1094 267 1089 267 L895 267 Q890 267 890 262 L890 229.6 Q890 224.6 895 224.6 L917 224.6 Z" fill="#fff" stroke="#fb8004" stroke-width="2.5" stroke-linejoin="round"/></svg>
<span id="t35" class="t" style="left:920.5px;top:238.66px;font-size:15.4px;color:#fb8a1c;line-height:16px;letter-spacing:0.165px;">Identification criteria</span>
<div style="left:637px;top:525px;width:69px;height:27px;background:#fff;box-shadow:inset 0 0 0 1px #8c96aa;"></div>
<div style="left:638px;top:524px;width:67px;height:2px;background:#fff;"></div>
<div style="left:705px;top:525px;width:130px;height:25px;background:#e9ecf1;box-shadow:inset 0 0 0 1px #8c96aa;"></div>
<span id="t36" class="t" style="left:646px;top:530.19px;font-size:11px;color:#000;line-height:16px;letter-spacing:-0.127px;"><u>P</u>roperties</span>
<span id="t37" class="t" style="left:713px;top:529.19px;font-size:11px;color:#000;line-height:16px;letter-spacing:-0.107px;">Re<u>q</u>uired Children (0/0)</span>
<div style="left:637px;top:560px;width:753px;height:250px;background:#fff;box-shadow:inset 0 0 0 1px #8c96aa;"></div>
<div style="left:639px;top:588px;width:749px;height:219px;background:#b5bccb;"></div>
<svg style="left:824px;top:588px" width="378" height="219" viewBox="824 588 378 219"><g font-family="Liberation Sans, sans-serif"><rect x="824" y="588" width="378" height="219" fill="#fff"/><rect x="824.5" y="588.5" width="377" height="218" fill="none" stroke="#84a3ca" stroke-width="1"/><rect x="825" y="589" width="376" height="11.5" fill="#dee1e6"/><path d="M828.5 600.5 V592.5 Q828.5 591 830 591 H898.5 Q900 591 900 592.5 V600.5 Z" fill="#fff"/><circle cx="834.3" cy="595.8" r="1.5" fill="#f29a1f"/><circle cx="835.4" cy="596.6" r="1.1" fill="#2f7fd6"/><text x="838.5" y="597" font-size="3" fill="#555" textLength="7" lengthAdjust="spacingAndGlyphs" >Shop</text><path d="M893.8 594.6 L895.8 596.6 M895.8 594.6 L893.8 596.6" stroke="#444" stroke-width="0.5"/><path d="M904.6 595.6 H908 M906.3 593.9 V597.3" stroke="#333" stroke-width="0.6"/><path d="M1151 591.6 L1152.6 593.2 L1154.2 591.6" fill="none" stroke="#444" stroke-width="0.5"/><path d="M1164.4 592.5 H1167.4" stroke="#444" stroke-width="0.5"/><rect x="1177.8" y="591" width="3" height="2.8" fill="none" stroke="#444" stroke-width="0.5"/><path d="M1191.2 591 L1194 593.8 M1194 591 L1191.2 593.8" stroke="#444" stroke-width="0.5"/><rect x="825" y="600.5" width="376" height="11" fill="#fff"/><rect x="858.5" y="602.2" width="300" height="7.6" rx="3.8" fill="#f1f3f4"/><path d="M834.6 606 H831.4 M832.6 604.8 L831.4 606 L832.6 607.2" fill="none" stroke="#555" stroke-width="0.55"/><path d="M840.6 606 H843.8 M842.6 604.8 L843.8 606 L842.6 607.2" fill="none" stroke="#bbb" stroke-width="0.55"/><circle cx="851.8" cy="606" r="1.5" fill="none" stroke="#444" stroke-width="0.6"/><rect x="852.6" y="604" width="1.2" height="1.2" fill="#444"/><rect x="862.5" y="605.2" width="1.8" height="1.8" fill="#555"/><text x="868" y="607.2" font-size="3.1" fill="#444" textLength="112.5" lengthAdjust="spacingAndGlyphs" >services.smartbear.com/samples/TestComplete14/smartstore/</text><rect x="1152" y="604" width="4.6" height="4.6" rx="0.6" fill="#27b3c4"/><rect x="1153.2" y="605.2" width="2.2" height="2.2" fill="#1565c0"/><circle cx="1143.5" cy="606.2" r="1.4" fill="none" stroke="#777" stroke-width="0.5"/><path d="M1153 0" /><path d="M1151.8 606.2 m-9 0" /><path d="M1152.9 604.3 l0.5 1.2 1.3 0.1 -1 0.9 0.3 1.3 -1.1 -0.7 -1.1 0.7 0.3 -1.3 -1 -0.9 1.3 -0.1 Z" fill="none" stroke="#666" stroke-width="0.4" transform="translate(0 0)"/><circle cx="1174" cy="606.2" r="1.9" fill="#333"/><circle cx="1183.8" cy="606.2" r="2.4" fill="#dfe3ea"/><circle cx="1183.8" cy="605.6" r="0.9" fill="#334"/><path d="M1182.2 607.8 Q1183.8 605.8 1185.4 607.8 Z" fill="#334"/><circle cx="1193.6" cy="604.6" r="0.45" fill="#333"/><circle cx="1193.6" cy="606.2" r="0.45" fill="#333"/><circle cx="1193.6" cy="607.8" r="0.45" fill="#333"/><rect x="825" y="611" width="376" height="0.5" fill="#e3e5e8"/><rect x="1195" y="611.5" width="6" height="194.5" fill="#f1f1f1"/><rect x="1196" y="616.6" width="3.6" height="45.5" fill="#c1c1c1"/><path d="M1196.8 614.4 L1197.8 613.2 L1198.8 614.4 Z M1196.8 802.4 L1197.8 803.6 L1198.8 802.4 Z" fill="#555"/><text x="853" y="619" font-size="3.1" fill="#777" textLength="11" lengthAdjust="spacingAndGlyphs" >USD ($)</text><path d="M866.6 617.4 L867.6 618.4 L868.6 617.4" fill="none" stroke="#555" stroke-width="0.5"/><text x="1029" y="619" font-size="2.9" fill="#666" textLength="21" lengthAdjust="spacingAndGlyphs" >CONTACT US</text><text x="1055.5" y="619" font-size="2.9" fill="#666" textLength="28.5" lengthAdjust="spacingAndGlyphs" >HELP &amp; SERVICES</text><path d="M1086.4 617.6 L1087.3 618.6 L1088.2 617.6 Z" fill="#555"/><text x="1098.5" y="619" font-size="2.9" fill="#222" textLength="10" lengthAdjust="spacingAndGlyphs" font-weight="700" >NEWS</text><text x="1113.5" y="619" font-size="2.9" fill="#222" textLength="9.5" lengthAdjust="spacingAndGlyphs" font-weight="700" >BLOG</text><text x="1128.5" y="619" font-size="2.9" fill="#222" textLength="14.5" lengthAdjust="spacingAndGlyphs" font-weight="700" >FORUMS</text><circle cx="1155.2" cy="618" r="1.7" fill="none" stroke="#555" stroke-width="0.5"/><text x="1160" y="619" font-size="2.9" fill="#666" textLength="11.5" lengthAdjust="spacingAndGlyphs" >LOG IN</text><rect x="825" y="624" width="370" height="0.6" fill="#e6e8ea"/><circle cx="855" cy="638" r="7" fill="#f6b81f"/><circle cx="855" cy="637.4" r="5.4" fill="#fdd23a"/><path d="M851 636.6 H859 L858 641.4 H852 Z" fill="#2a2208"/><path d="M852.2 636.6 L855 633.2 L857.8 636.6" fill="none" stroke="#2a2208" stroke-width="0.8"/><path d="M853.2 637.6 V640.6 M855 637.6 V640.6 M856.8 637.6 V640.6" stroke="#fdd23a" stroke-width="0.6"/><text x="865.8" y="640.2" font-size="5.4" fill="#222" textLength="50.5" lengthAdjust="spacingAndGlyphs" font-weight="700" >MY-SMARTSTORE</text><text x="889.8" y="644" font-size="2.4" fill="#222" textLength="26.4" lengthAdjust="spacingAndGlyphs" font-weight="700" >buy with a smile</text><rect x="922.9" y="632.3" width="159.5" height="11.9" fill="#fff" stroke="#f0101a" stroke-width="1.3"/><text x="927.5" y="639.4" font-size="3.1" fill="#9a9a9a" textLength="47.5" lengthAdjust="spacingAndGlyphs" >What are you looking for?</text><rect x="1070.2" y="632.8" width="11.7" height="10.9" fill="#3f4db8"/><circle cx="1075.6" cy="637.6" r="1.9" fill="none" stroke="#fff" stroke-width="0.7"/><path d="M1077 639 L1078.8 640.8" stroke="#fff" stroke-width="0.8"/><rect x="1091" y="634.2" width="6.6" height="6" rx="1" fill="none" stroke="#444" stroke-width="0.6"/><path d="M1092.2 640.2 L1091 641.8 M1097 633.4 V635.4 M1096 634.4 H1098" stroke="#444" stroke-width="0.5"/><text x="1101" y="637" font-size="2.7" fill="#aaa" textLength="14.5" lengthAdjust="spacingAndGlyphs" >Compare</text><text x="1101" y="641.2" font-size="2.9" fill="#222" textLength="14.8" lengthAdjust="spacingAndGlyphs" font-weight="700" >Products</text><path d="M1126.2 641.4 C1120.6 637.6 1122.2 633.2 1125 634 C1125.8 634.2 1126.2 635 1126.2 635 C1126.2 635 1126.6 634.2 1127.4 634 C1130.2 633.2 1131.8 637.6 1126.2 641.4 Z" fill="none" stroke="#444" stroke-width="0.6"/><text x="1132.8" y="637" font-size="2.7" fill="#aaa" textLength="7.4" lengthAdjust="spacingAndGlyphs" >Wish</text><text x="1132.8" y="641.2" font-size="2.9" fill="#222" textLength="5.6" lengthAdjust="spacingAndGlyphs" font-weight="700" >List</text><path d="M1148.2 635.4 H1153.8 V641.6 H1148.2 Z M1149.6 635.4 V634.6 Q1151 632.6 1152.4 634.6 V635.4 M1148.2 636 L1147 637.2 V641 L1148.2 641.6" fill="none" stroke="#444" stroke-width="0.6"/><text x="1157" y="637" font-size="2.7" fill="#aaa" textLength="15" lengthAdjust="spacingAndGlyphs" >Shopping</text><text x="1157" y="641.2" font-size="2.9" fill="#222" textLength="7" lengthAdjust="spacingAndGlyphs" font-weight="700" >Cart</text><rect x="825" y="651.5" width="370" height="18" fill="#f6f7f8"/><text x="849.5" y="661.8" font-size="3.5" fill="#333" textLength="14.2" lengthAdjust="spacingAndGlyphs" font-weight="700" >Books</text><path d="M864.9000000000001 660 l1 1 1 -1" fill="none" stroke="#333" stroke-width="0.5"/><text x="872.8" y="661.8" font-size="3.5" fill="#333" textLength="19.4" lengthAdjust="spacingAndGlyphs" font-weight="700" >Furniture</text><text x="897.8" y="661.8" font-size="3.5" fill="#333" textLength="30" lengthAdjust="spacingAndGlyphs" font-weight="700" >Mobile phone</text><text x="933.6" y="661.8" font-size="3.5" fill="#333" textLength="14.2" lengthAdjust="spacingAndGlyphs" font-weight="700" >Sports</text><path d="M949.0000000000001 660 l1 1 1 -1" fill="none" stroke="#333" stroke-width="0.5"/><text x="957.8" y="661.8" font-size="3.5" fill="#333" textLength="16" lengthAdjust="spacingAndGlyphs" font-weight="700" >Fashion</text><path d="M975.0 660 l1 1 1 -1" fill="none" stroke="#333" stroke-width="0.5"/><text x="984" y="661.8" font-size="3.5" fill="#333" textLength="17" lengthAdjust="spacingAndGlyphs" font-weight="700" >Gaming</text><text x="1006.6" y="661.8" font-size="3.5" fill="#333" textLength="18.4" lengthAdjust="spacingAndGlyphs" font-weight="700" >Watches</text><text x="1030" y="661.8" font-size="3.5" fill="#333" textLength="21.6" lengthAdjust="spacingAndGlyphs" font-weight="700" >Gift Cards</text><rect x="969.4" y="653" width="10.6" height="4.6" rx="0.5" fill="#2ebd59"/><text x="971.4" y="656.7" font-size="2.8" fill="#fff" textLength="6.6" lengthAdjust="spacingAndGlyphs" font-weight="700" >SALE</text><rect x="1020.2" y="653.2" width="6" height="5" fill="#ef3b2d"/><path d="M1022 654.6 L1024.6 657" stroke="#fff" stroke-width="0.7"/><text x="847" y="686.4" font-size="10.2" fill="#333" textLength="90" lengthAdjust="spacingAndGlyphs" >Welcome to our store</text><rect x="846.5" y="694.4" width="328" height="0.6" fill="#e3e5e7"/><text x="846.5" y="704.2" font-size="3.1" fill="#888" textLength="276" lengthAdjust="spacingAndGlyphs" >Online shopping is the process consumers go through to purchase products or services over the Internet. You can edit this in the admin site.</text><rect x="846.3" y="718.2" width="51.2" height="60.2" fill="#fff" stroke="#e6e6e6" stroke-width="0.7"/><text x="871.9" y="771.8" font-size="3.1" fill="#333" text-anchor="middle" textLength="26.5" lengthAdjust="spacingAndGlyphs">Mobile phone</text><rect x="902" y="718.2" width="51.2" height="60.2" fill="#fff" stroke="#e6e6e6" stroke-width="0.7"/><text x="927.6" y="771.8" font-size="3.1" fill="#333" text-anchor="middle" textLength="11.8" lengthAdjust="spacingAndGlyphs">Sports</text><rect x="957.3" y="718.2" width="51.2" height="60.2" fill="#fff" stroke="#e6e6e6" stroke-width="0.7"/><text x="982.9" y="771.8" font-size="3.1" fill="#333" text-anchor="middle" textLength="17.2" lengthAdjust="spacingAndGlyphs">Furniture</text><rect x="1012.5" y="718.2" width="51.2" height="60.2" fill="#fff" stroke="#e6e6e6" stroke-width="0.7"/><text x="1038.1" y="771.8" font-size="3.1" fill="#333" text-anchor="middle" textLength="20.2" lengthAdjust="spacingAndGlyphs">Sunglasses</text><rect x="1068.3" y="718.2" width="51.2" height="60.2" fill="#fff" stroke="#e6e6e6" stroke-width="0.7"/><text x="1093.8999999999999" y="771.8" font-size="3.1" fill="#333" text-anchor="middle" textLength="12.4" lengthAdjust="spacingAndGlyphs">Soccer</text><rect x="1123.5" y="718.2" width="51.2" height="60.2" fill="#fff" stroke="#e6e6e6" stroke-width="0.7"/><text x="1149.1" y="771.8" font-size="3.1" fill="#333" text-anchor="middle" textLength="18.8" lengthAdjust="spacingAndGlyphs">Basketball</text><rect x="846.3" y="782.6" width="51.2" height="30" fill="#fff" stroke="#e6e6e6" stroke-width="0.7"/><rect x="902" y="782.6" width="51.2" height="30" fill="#fff" stroke="#e6e6e6" stroke-width="0.7"/><rect x="957.3" y="782.6" width="51.2" height="30" fill="#fff" stroke="#e6e6e6" stroke-width="0.7"/><rect x="1012.5" y="782.6" width="51.2" height="30" fill="#fff" stroke="#e6e6e6" stroke-width="0.7"/><rect x="1068.3" y="782.6" width="51.2" height="30" fill="#fff" stroke="#e6e6e6" stroke-width="0.7"/><rect x="865.8" y="723.8" width="11.4" height="35.2" rx="2.2" fill="#1c1c1c"/><ellipse cx="871.5" cy="732.2" rx="4.4" ry="5.6" fill="#9a9a9a"/><ellipse cx="871.5" cy="731.2" rx="3.4" ry="3.6" fill="#c4c4c4"/><ellipse cx="871.5" cy="742.4" rx="4.2" ry="2.9" fill="#a8a8a8"/><rect x="866.8" y="747.4" width="9.4" height="10.4" rx="1" fill="#3a3a3a"/><path d="M868.4 749.4 V756.6 M871.5 749.4 V756.6 M874.6 749.4 V756.6" stroke="#c8c8c8" stroke-width="1.5" stroke-dasharray="1.4 1"/><path d="M914 732.6 C917 728.4 921.8 727.6 924.6 729.4 C927 733.6 930.6 741 930.4 748.6 C930.2 754.6 928 759.6 924.4 760.4 C921 760.8 919.6 756.6 918.8 751.6 C917.8 745.2 913.6 738.6 914 732.6 Z" fill="#4f79a8"/><path d="M927.8 729.4 C931.6 727.2 936.8 728.6 938 732 C939.4 736.4 941 740.6 940 746.6 C939 753 937.6 758.2 933.6 758.6 C930.6 758.4 929.6 754.6 929.8 748.6 C930 741.6 927 735 927.8 729.4 Z" fill="#1d3a5e"/><path d="M916 736 l3 1.6 M916.6 740 l3 1.4 M917.8 744 l3 1.2 M919 748 l2.8 1" stroke="#dfe8f2" stroke-width="0.9"/><ellipse cx="984.4" cy="761.2" rx="9.4" ry="1.9" fill="#b9b9ad"/><rect x="983" y="756" width="2.8" height="5" fill="#a8a89c"/><circle cx="983" cy="741" r="17.2" fill="#e9e6dd"/><path d="M983 723.8 A17.2 17.2 0 0 1 996 752.4 A20 20 0 0 0 983 723.8 Z" fill="#cfccc2"/><ellipse cx="978.6" cy="738.6" rx="12.4" ry="15" fill="#c9540f" transform="rotate(18 978.6 738.6)"/><ellipse cx="977.4" cy="735.6" rx="9.6" ry="10.8" fill="#a9400a" transform="rotate(18 977.4 735.6)"/><ellipse cx="979" cy="748.2" rx="9" ry="3.6" fill="#e7741c"/><path d="M1026.4 731.6 Q1026.4 729 1029 728.8 L1054 728.6 Q1056.8 728.8 1056.8 731.4 V742.6 H1026.4 Z" fill="#a9694a"/><path d="M1026.4 729.6 L1041.6 737.4 L1056.8 729.6" fill="none" stroke="#8a4f33" stroke-width="0.7"/><path d="M1019 743.2 L1047 739.6 L1059 742.6 V751.4 L1030.4 758.4 L1019 752.4 Z" fill="#17181c"/><path d="M1019 743.2 L1030.4 747.8 L1059 742.6" fill="none" stroke="#3c3e46" stroke-width="0.6"/><path d="M1017.6 740.4 C1020 738.6 1027.6 738.2 1031.4 739 C1032.6 742.2 1030.8 746 1026.4 746.2 C1021.6 746.4 1018.4 744.2 1017.6 740.4 Z" fill="#222"/><path d="M1019.4 740.8 C1022 739.6 1027 739.4 1030 739.9 C1030.4 742.4 1029 744.6 1026 744.8 C1022.4 745 1020.2 743.4 1019.4 740.8 Z" fill="#6f87a8"/><path d="M1034.4 739.6 C1037.4 738.4 1043.8 738.6 1047.2 739.8 C1047.4 742.8 1045.4 745.4 1041.6 745.4 C1037.4 745.2 1034.8 743 1034.4 739.6 Z" fill="#222"/><path d="M1035.8 740.2 C1038.4 739.4 1043 739.6 1045.8 740.4 C1045.8 742.6 1044.2 744.2 1041.4 744.2 C1038.4 744 1036.4 742.4 1035.8 740.2 Z" fill="#5c7496"/><ellipse cx="1094" cy="761.2" rx="15" ry="1.8" fill="#e4e4e4"/><circle cx="1093.6" cy="743" r="19.4" fill="url(#sb)" stroke="#cfcfcf" stroke-width="0.5"/><path d="M1092.6 725.2 Q1098 723.4 1104 726.6 L1102.4 730.2 Q1097 730 1093.6 728.4 Z" fill="#141414"/><path d="M1079.6 734.6 L1085.8 733 L1088.8 738.2 L1086.4 745.4 L1080.6 746 L1077.8 740.4 Z" fill="#141414"/><path d="M1098.8 743.8 L1104.8 739.4 L1108.6 743.6 L1107 750.4 L1100.4 751.8 L1097.6 748 Z" fill="#141414"/><path d="M1083.4 755.8 L1087.4 754 L1093.8 757.2 L1093 761.4 Q1087 761.6 1082.2 758.2 Z" fill="#141414"/><path d="M1111.6 736.4 Q1113.4 740 1112.8 743.6 L1111 741.4 Z M1074.8 744 Q1075 747.4 1076.2 749.6 L1075.4 745.4 Z" fill="#141414"/><path d="M1088.8 738.2 L1097.4 740.4 L1098.8 743.8 M1086.4 745.4 L1090.6 751.6 L1097.6 748 M1090.6 751.6 L1087.4 754 M1093.6 728.4 L1092.6 733.4 L1085.8 733 M1092.6 733.4 L1097.4 740.4 M1102.4 730.2 L1104.8 739.4" fill="none" stroke="#c9c9c9" stroke-width="0.5"/><defs><radialGradient id="bb" cx="0.36" cy="0.3" r="0.8"><stop offset="0" stop-color="#e58a4e"/><stop offset="0.55" stop-color="#c9602b"/><stop offset="1" stop-color="#9c4318"/></radialGradient><radialGradient id="sb" cx="0.4" cy="0.32" r="0.75"><stop offset="0" stop-color="#ffffff"/><stop offset="0.7" stop-color="#f1f1f1"/><stop offset="1" stop-color="#c4c4c4"/></radialGradient></defs><circle cx="1149" cy="743.4" r="18.4" fill="url(#bb)"/><path d="M1141.4 726.6 C1135.4 736 1136 752 1144.4 761.2 M1132 741.6 C1142 743.4 1154 737.4 1162.6 731 M1133.8 751.6 C1144 752.2 1158 749.6 1167 745.2 M1138.4 728.4 C1136.6 737 1139 754 1152 761.4" fill="none" stroke="#3a1606" stroke-width="0.7"/><rect x="851.6" y="794.2" width="41" height="12" fill="#e1e1e1"/><circle cx="871.4" cy="805.4" r="5.8" fill="#f4f6fb"/><circle cx="870.4" cy="804" r="3" fill="#fff"/><path d="M910 801.6 C913 798.2 919.6 799.2 922.6 801.2 C926 798.4 936 797 944 799.6 L945.4 803.2 L944 806 H912.6 Z" fill="#e5d7c0"/><path d="M911.6 803.4 C914.4 800.6 919.8 801 922.6 803.4 L924 806 H912.4 Z M925.4 803.2 C928.4 800.4 936.6 800 940.6 802.2 L941.6 806 H926.4 Z" fill="#3b2a33"/><path d="M910 801.6 C913 798.2 919.6 799.2 922.6 801.2" fill="none" stroke="#c9473f" stroke-width="0.7"/><path d="M965 806 C965.4 799.4 968 795.4 973 794.4 H993 C998 795.4 1000.8 799.4 1001.4 806 Z" fill="#17171a"/><circle cx="983.4" cy="797.8" r="1.5" fill="#fff"/><circle cx="995.6" cy="799" r="1.1" fill="#f3d019"/><circle cx="997.8" cy="801.4" r="1.1" fill="#e23a2e"/><circle cx="993.2" cy="801.6" r="1.1" fill="#2a8ee8"/><circle cx="995.6" cy="804" r="1.1" fill="#3ec444"/><circle cx="972.6" cy="802" r="2.4" fill="#2b2b30"/><path d="M1030.6 793.4 C1036 791 1044.6 791 1048.6 793.6 C1050 797 1049.8 802 1048.6 806 H1039 C1038.6 801 1036 797 1030.6 793.4 Z" fill="#6a3d28"/><ellipse cx="1034" cy="804.6" rx="8.6" ry="5.4" fill="#d4d4d0"/><ellipse cx="1034" cy="805.4" rx="6.4" ry="4" fill="#f5f4ee"/><rect x="1073.8" y="796" width="39.4" height="10.4" fill="#f7921e"/><path d="M1106 796 H1113.2 V806.4 H1101.4 Z" fill="#fbb03b"/><text x="1078.4" y="805.2" font-size="4.6" fill="#fde2b8" textLength="24" lengthAdjust="spacingAndGlyphs" >GIFT CARDS</text><rect x="824.5" y="588.5" width="377" height="218" fill="none" stroke="#84a3ca" stroke-width="1"/></g></svg>
<div style="left:639px;top:806.5px;width:749px;height:1px;background:#dfe3ea;"></div>
<svg style="left:639px;top:562px;" width="200" height="26" viewBox="639 562 200 26"><rect x="642" y="568" width="2" height="2" fill="#999"/><rect x="642" y="572" width="2" height="2" fill="#999"/><rect x="642" y="576" width="2" height="2" fill="#999"/><rect x="642" y="580" width="2" height="2" fill="#999"/><path d="M655.92 575.01 A5.6 5.6 0 0 1 665.79 571.90 M667.08 575.99 A5.6 5.6 0 0 1 657.21 579.10" fill="none" stroke="#1a98e0" stroke-width="3.2"/><path d="M669.10 568.40 V575.10 H663.30 Z" fill="#1a98e0"/><path d="M653.90 582.60 V575.90 H659.70 Z" fill="#1a98e0"/><path d="M678.2 570.6 H690.2 M681.6 570.4 V568.2 H686.8 V570.4 M679.4 571 V581 Q679.4 582.2 680.6 582.2 H687.8 Q689 582.2 689 581 V571 M682 573 V579.6 M684.2 573 V579.6 M686.4 573 V579.6" fill="none" stroke="#707070" stroke-width="1.5"/><rect x="699" y="565" width="1" height="20" fill="#d9d9d9"/><circle cx="712.3" cy="572.8" r="5" fill="#fff" stroke="#6a6a6a" stroke-width="1.7"/><path d="M709.0999999999999 577 L706.3 581.4" stroke="#6a6a6a" stroke-width="2" stroke-linecap="round"/><circle cx="717.0999999999999" cy="578" r="4.7" fill="#fff"/><circle cx="717.0999999999999" cy="578" r="3.9" fill="#1a98e0"/><path d="M714.8999999999999 578 H719.3 M717.0999999999999 575.8 V580.2" stroke="#fff" stroke-width="1.3"/><circle cx="735.4" cy="572.8" r="5" fill="#fff" stroke="#6a6a6a" stroke-width="1.7"/><path d="M732.1999999999999 577 L729.4 581.4" stroke="#6a6a6a" stroke-width="2" stroke-linecap="round"/><circle cx="740.1999999999999" cy="578" r="4.7" fill="#fff"/><circle cx="740.1999999999999" cy="578" r="3.9" fill="#1a98e0"/><path d="M737.9999999999999 578 H742.4" stroke="#fff" stroke-width="1.3"/><circle cx="758.5" cy="572.8" r="5" fill="#fff" stroke="#6a6a6a" stroke-width="1.7"/><path d="M755.3 577 L752.5 581.4" stroke="#6a6a6a" stroke-width="2" stroke-linecap="round"/><circle cx="763.3" cy="578" r="4.7" fill="#fff"/><circle cx="763.3" cy="578" r="3.9" fill="#d6202f"/><path d="M761.6999999999999 576.4 L764.9 579.6 M764.9 576.4 L761.6999999999999 579.6" stroke="#fff" stroke-width="1.3"/><rect x="772.5" y="564.5" width="22" height="21" fill="#cfe6f3" stroke="#8fbbd9" stroke-width="1"/><path d="M779.6 571 L787.4 579 M787.4 571 L779.6 579" stroke="#6a6a6a" stroke-width="1.8"/><path d="M776.9 568.4 L782.9 568.4 L776.9 574.4 Z" fill="#1a98e0"/><path d="M790.1 568.4 L784.1 568.4 L790.1 574.4 Z" fill="#1a98e0"/><path d="M776.9 581.6 L782.9 581.6 L776.9 575.6 Z" fill="#1a98e0"/><path d="M790.1 581.6 L784.1 581.6 L790.1 575.6 Z" fill="#1a98e0"/></svg>
</body></html>
